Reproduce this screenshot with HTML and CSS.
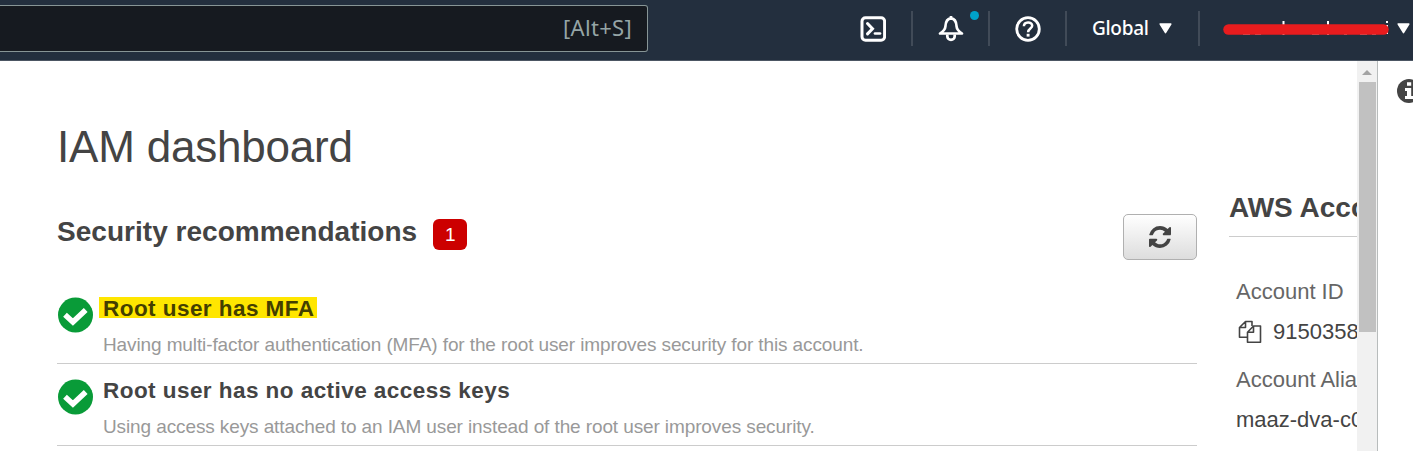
FILE: index.html
```html
<!DOCTYPE html>
<html lang="en">
<head>
<meta charset="utf-8">
<title>IAM dashboard</title>
<link rel="stylesheet" href="styles.css">
</head>
<body>
<header class="topbar">
  <div class="search"><span class="hint">[Alt+S]</span></div>
  <nav class="tools">
    <div class="tool shell">
      <svg width="26" height="26" viewBox="0 0 26 26" fill="none" stroke="#fff" stroke-width="3"><rect x="2" y="1.7" width="22.6" height="22.6" rx="3.500"/><path d="M7.500 7.500l5 5.200-5 5.200" stroke-linecap="round"/><path d="M15 17.500h5" stroke-width="2.700" stroke-linecap="round"/></svg>
    </div>
    <div class="tool bell">
      <svg width="26" height="26" viewBox="0 0 26 26" fill="none" stroke="#fff" stroke-width="2.7" stroke-linejoin="round"><path d="M13 2.4C8.3 2.8 7.6 6.500 7.400 10.500C7.200 14 5 15.500 2 17.500H24C21 15.500 18.800 14 18.600 10.500C18.400 6.500 17.700 2.800 13 2.400Z"/><path d="M13 0v3"/><path d="M9.300 18.500v1.700a3.700 3.700 0 0 0 7.400 0V18.500"/></svg>
      <span class="dot"></span>
    </div>
    <div class="tool help">
      <svg width="26" height="26" viewBox="0 0 26 26" fill="none" stroke="#fff"><circle cx="13" cy="13" r="11.300" stroke-width="2.800"/><path d="M8.900 10.300C8.900 5.200 17.200 5.200 17.200 9.800C17.200 12.500 13.100 12.700 13.100 16.200" stroke-width="2.500"/><path d="M13.100 17.800v2.800" stroke-width="2.900"/></svg>
    </div>
    <div class="tool region"><span class="region-name">Global</span><svg width="13" height="11" viewBox="0 0 13 11"><path d="M1.200 1h10.600L6.500 9.700Z" fill="#fff" stroke="#fff" stroke-width="1.500" stroke-linejoin="round"/></svg></div>
    <div class="tool account">
      <svg width="168" height="20" viewBox="0 0 168 20"><path d="M61.500 3v14M106 3v14M165 7v9M165 3v2" stroke="#fff" stroke-width="2"/><path d="M21 16h7M33 16h6M90 16h7M122 16h3M138 16h7M150 16h4" stroke="#c9ccd1" stroke-width="1.500"/><path d="M6.500 11.500H161.500" stroke="#e81c1e" stroke-width="10.500" stroke-linecap="round"/></svg>
      <svg width="13" height="11" viewBox="0 0 13 11"><path d="M1.200 1h10.600L6.500 9.700Z" fill="#fff" stroke="#fff" stroke-width="1.500" stroke-linejoin="round"/></svg>
    </div>
  </nav>
</header>
<div class="workspace">
  <main class="content">
    <section class="dashboard">
      <h1 class="title">IAM dashboard</h1>
      <div class="section-head">
        <h2 class="section-title">Security recommendations</h2>
        <span class="count">1</span>
        <button class="refresh" aria-label="Refresh"><svg width="22" height="22" viewBox="0 0 1536 1536"><path fill="#444" d="M1511 928q0 5-1 7-64 268-268 434.500T764 1536q-146 0-282.500-55T238 1324l-129 129q-19 19-45 19t-45-19-19-45V960q0-26 19-45t45-19h448q26 0 45 19t19 45-19 45l-137 137q71 66 161 102t187 36q134 0 250-65t186-179q11-17 53-117 8-23 30-23h192q13 0 22.500 9.500t9.500 22.500zm25-800v448q0 26-19 45t-45 19h-448q-26 0-45-19t-19-45 19-45l138-138Q969 256 768 256q-134 0-250 65T332 500q-11 17-53 117-8 23-30 23H50q-13 0-22.500-9.500T18 608v-7q65-268 270-434.500T768 0q146 0 284 55.500T1297 212l130-129q19-19 45-19t45 19 19 45z"/></svg></button>
      </div>
      <ul class="checks">
        <li class="check">
          <svg class="tick" width="36" height="36" viewBox="0 0 36 36"><circle cx="18.500" cy="18" r="17.500" fill="#099b38"/><path d="M8 17.800L15.900 25L28.700 13" fill="none" stroke="#fff" stroke-width="5.500"/></svg>
          <div><h3 class="check-title"><span class="marked">Root user has MFA</span></h3><p class="check-note">Having multi-factor authentication (MFA) for the root user improves security for this account.</p></div>
        </li>
        <li class="check">
          <svg class="tick" width="36" height="36" viewBox="0 0 36 36"><circle cx="18.500" cy="18" r="17.500" fill="#099b38"/><path d="M8 17.800L15.900 25L28.700 13" fill="none" stroke="#fff" stroke-width="5.500"/></svg>
          <div><h3 class="check-title">Root user has no active access keys</h3><p class="check-note">Using access keys attached to an IAM user instead of the root user improves security.</p></div>
        </li>
      </ul>
    </section>
    <aside class="account-panel">
      <h2 class="panel-title">AWS Acco</h2>
      <dl class="facts">
        <dt>Account ID</dt>
        <dd><svg class="copy" width="24" height="24" viewBox="0 0 24 24" fill="none" stroke="#444" stroke-width="1.600" stroke-linejoin="round"><path d="M9 17.200H1.500V7.500L7.500 1.500H14V6M1.500 7.500H7.500V1.500"/><path d="M9.500 12.200L15.500 6H22.500V22.200H9.500ZM9.500 12.200H15.500V6"/></svg>9150358</dd>
        <dt>Account Alia</dt>
        <dd>maaz-dva-c0</dd>
      </dl>
    </aside>
  </main>
  <div class="scrollbar"><span class="arrow"></span><span class="thumb"></span></div>
  <div class="help-rail"><svg width="24" height="24" viewBox="0 0 24 24"><circle cx="12" cy="12" r="12" fill="#444"/><path d="M10 3.200h4.200v3.500H10ZM8 9h6.200v8H16v3H8v-3h2v-5H8Z" fill="#fff"/></svg></div>
</div>
</body>
</html>
```
FILE: styles.css
```css
* { box-sizing: border-box; }
body { margin: 0; width: 1413px; height: 451px; overflow: hidden; background: #fff; color: #444; font-family: "Liberation Sans", Arial, sans-serif; }
h1, h2, h3, p, ul, dl, dd { margin: 0; padding: 0; }
svg { display: block; flex: none; }

.topbar { display: flex; height: 61px; background: #232f3e; border-bottom: 1px solid #4c5663; color: #fff; font-family: "Noto Sans", sans-serif; }
.search { width: 648px; height: 47px; margin-top: 5px; padding-right: 15px; display: flex; align-items: center; justify-content: flex-end; background: #161a20; border: 1px solid #879596; border-left: 0; border-radius: 0 3px 3px 0; }
.hint { margin-top: -3px; color: #95a5a6; font-size: 22px; line-height: 28px; letter-spacing: 0.3px; }
.tools { display: flex; margin-left: auto; padding-top: 11px; }
.tool { display: flex; align-items: center; height: 35px; flex: none; }
.tool + .tool { border-left: 2px solid #414b58; }
.shell { width: 51px; }
.bell { position: relative; width: 77px; padding-left: 25px; }
.dot { position: absolute; left: 57px; top: 0; width: 9px; height: 9px; border-radius: 50%; background: #00a1c9; }
.help { width: 77px; padding-left: 25px; }
.region { width: 133px; padding-left: 25px; gap: 10px; }
.region-name { margin-top: -2px; font-size: 19px; line-height: 24px; font-weight: 500; letter-spacing: -0.3px; }
.account { width: 215px; padding-left: 22px; gap: 7px; }
.account svg:first-child { margin-top: -1px; }

.workspace { display: flex; height: 390px; }
.content { display: flex; width: 1357px; padding-left: 57px; overflow: hidden; }
.dashboard { width: 1140px; flex: none; padding-top: 60px; }
.title { font-size: 44px; line-height: 52px; font-weight: 400; letter-spacing: -0.2px; }
.section-head { display: flex; align-items: center; height: 46px; margin-top: 41px; }
.section-title { font-size: 28px; line-height: 32px; margin-top: -11px; font-weight: 700; white-space: nowrap; letter-spacing: 0.03px; }
.count { width: 34px; height: 31px; margin: -5px 0 0 16px; border-radius: 6px; background: #c00; color: #fff; text-align: center; font-size: 19px; line-height: 31px; }
.refresh { display: flex; align-items: center; justify-content: center; width: 74px; height: 46px; margin-left: auto; padding: 0; border: 1px solid #b0b0b0; border-radius: 5px; background: linear-gradient(#fff, #ddd); }
.checks { list-style: none; margin-top: 22px; }
.check { display: flex; gap: 10px; height: 82px; border-bottom: 1px solid #ccc; }
.tick { margin: 15px 0 0 0; }
.check-title { font-size: 22.5px; line-height: 26px; margin-top: 14px; letter-spacing: 0.45px; white-space: nowrap; }
.marked { display: inline-block; height: 21px; line-height: 23px; margin: 1px 0 0 -4px; padding: 0 3px 0 4px; background: #ffe600; color: #443f00; vertical-align: top; }
.check-note { margin-top: 11px; font-size: 19px; line-height: 24px; letter-spacing: -0.11px; color: #999; white-space: nowrap; }

.account-panel { width: 400px; flex: none; margin-left: 32px; padding-top: 130px; }
.panel-title { height: 46px; border-bottom: 1px solid #ccc; font-size: 28px; line-height: 34px; white-space: nowrap; }
.facts { padding: 40px 0 0 7px; font-size: 22px; }
.facts dt { height: 30px; line-height: 30px; color: #666; }
.facts dd { display: flex; height: 30px; margin: 10px 0 18px; line-height: 30px; }
.copy { margin: 3px 11px 0 2px; }
.scrollbar { width: 21px; height: 390px; padding: 9px 2px 0; background: #f1f1f1; border-right: 1px solid #b8bcbc; }
.arrow { display: block; width: 0; margin: 0 auto 7px; border: 5px solid transparent; border-top: 0; border-bottom-color: #a3a3a3; }
.thumb { display: block; width: 17px; height: 250px; background: #c1c1c1; }
.help-rail { width: 35px; overflow: hidden; padding: 18px 0 0 19px; }
```
